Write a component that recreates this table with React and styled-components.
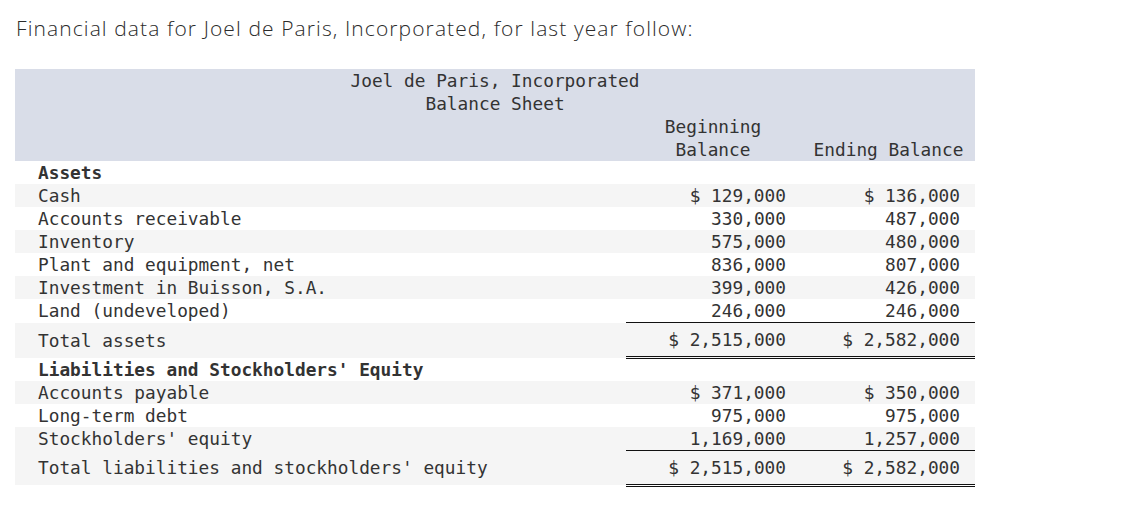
import React from "react";
import styled, { createGlobalStyle } from "styled-components";

const GlobalStyle = createGlobalStyle`
  html, body {
    margin: 0;
    padding: 0;
    background: #ffffff;
  }
`;

const Page = styled.div`
  padding: 15px 15px 0 15px;
`;

const Intro = styled.p`
  margin: 0 0 28px 1px;
  font-family: "Open Sans", "Liberation Sans", sans-serif;
  font-size: 21px;
  font-weight: 300;
  letter-spacing: 1.1px;
  line-height: 26px;
  color: #2b2b2b;
`;

const Sheet = styled.table`
  width: 960px;
  table-layout: fixed;
  border-collapse: collapse;
  border-spacing: 0;
  font-family: "DejaVu Sans Mono", "Liberation Mono", monospace;
  font-size: 17.8px;
  line-height: 23px;
  color: #333333;
`;

const HeadRow = styled.tr`
  background: #d9dde8;
`;

const TitleCell = styled.th`
  padding: 0;
  font-weight: 400;
  text-align: center;
  white-space: pre;
`;

const ColHead = styled.th`
  padding: 0 0 0 ${(p) => p.$pad || 0}px;
  font-weight: 400;
  text-align: center;
  vertical-align: bottom;
  white-space: pre;
`;

const Row = styled.tr`
  background: ${(p) => (p.$shade ? "#f5f5f5" : "#ffffff")};
  height: ${(p) => (p.$total ? 35 : 23)}px;
`;

const Label = styled.td`
  padding: 0 0 0 23px;
  font-weight: ${(p) => (p.$bold ? 700 : 400)};
  white-space: pre;
`;

const Amount = styled.td`
  padding: 0 ${(p) => p.$pad}px 0 0;
  text-align: right;
  white-space: pre;
  border-top: ${(p) => (p.$total ? "1px solid #111" : "none")};
  border-bottom: ${(p) => (p.$total ? "3px double #111" : "none")};
`;

const sections = [
  {
    title: "Assets",
    rows: [
      ["Cash", "$ 129,000", "$ 136,000"],
      ["Accounts receivable", "330,000", "487,000"],
      ["Inventory", "575,000", "480,000"],
      ["Plant and equipment, net", "836,000", "807,000"],
      ["Investment in Buisson, S.A.", "399,000", "426,000"],
      ["Land (undeveloped)", "246,000", "246,000"],
    ],
    total: ["Total assets", "$ 2,515,000", "$ 2,582,000"],
  },
  {
    title: "Liabilities and Stockholders' Equity",
    rows: [
      ["Accounts payable", "$ 371,000", "$ 350,000"],
      ["Long-term debt", "975,000", "975,000"],
      ["Stockholders' equity", "1,169,000", "1,257,000"],
    ],
    total: ["Total liabilities and stockholders' equity", "$ 2,515,000", "$ 2,582,000"],
  },
];

function Section({ data }) {
  return (
    <>
      <Row>
        <Label $bold>{data.title}</Label>
        <td />
        <td />
      </Row>
      {data.rows.map(([label, begin, end], i) => (
        <Row key={label} $shade={i % 2 === 0}>
          <Label>{label}</Label>
          <Amount $pad={10}>{begin}</Amount>
          <Amount $pad={15}>{end}</Amount>
        </Row>
      ))}
      <Row $shade $total>
        <Label>{data.total[0]}</Label>
        <Amount $pad={10} $total>
          {data.total[1]}
        </Amount>
        <Amount $pad={15} $total>
          {data.total[2]}
        </Amount>
      </Row>
    </>
  );
}

export default function App() {
  return (
    <Page>
      <GlobalStyle />
      <Intro>Financial data for Joel de Paris, Incorporated, for last year follow:</Intro>
      <Sheet>
        <colgroup>
          <col style={{ width: 611 }} />
          <col style={{ width: 170 }} />
          <col style={{ width: 179 }} />
        </colgroup>
        <thead>
          <HeadRow>
            <TitleCell colSpan={3}>{"Joel de Paris, Incorporated\nBalance Sheet"}</TitleCell>
          </HeadRow>
          <HeadRow>
            <ColHead />
            <ColHead $pad={4}>{"Beginning\nBalance"}</ColHead>
            <ColHead $pad={6}>Ending Balance</ColHead>
          </HeadRow>
        </thead>
        <tbody>
          {sections.map((s) => (
            <Section key={s.title} data={s} />
          ))}
        </tbody>
      </Sheet>
    </Page>
  );
}
